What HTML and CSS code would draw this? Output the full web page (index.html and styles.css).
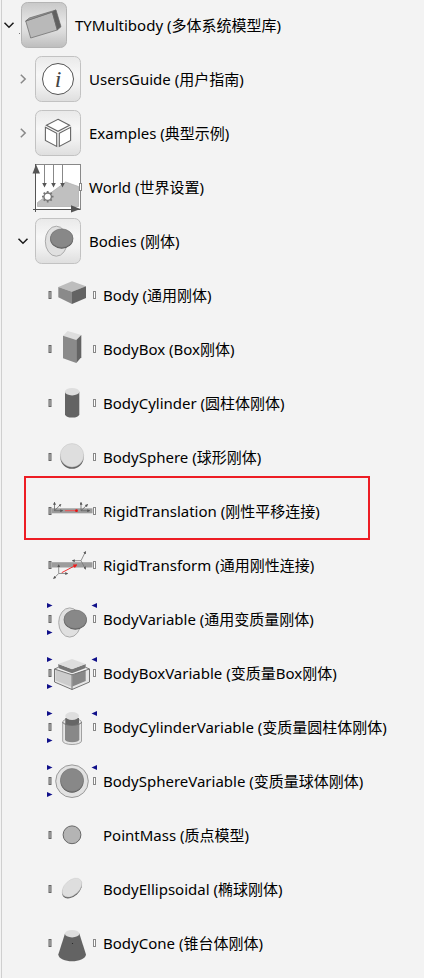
FILE: index.html
```html
<!DOCTYPE html>
<html lang="zh-CN">
<head>
<meta charset="utf-8">
<meta name="viewport" content="width=device-width, initial-scale=1">
<title>TYMultibody</title>
<link rel="stylesheet" href="styles.css">
</head>
<body>
<svg class="defs" aria-hidden="true">
  <defs>
    <linearGradient id="tile" x1="0" y1="0" x2="0" y2="1">
      <stop offset="0" stop-color="#e9e9e9"/><stop offset=".4" stop-color="#f7f7f7"/><stop offset=".65" stop-color="#f1f1f1"/><stop offset="1" stop-color="#dedede"/>
    </linearGradient>
    <linearGradient id="tile-dark" x1="0" y1="0" x2="0" y2="1">
      <stop offset="0" stop-color="#c8c8c8"/><stop offset=".45" stop-color="#e6e6e6"/><stop offset=".65" stop-color="#dcdcdc"/><stop offset="1" stop-color="#bdbdbd"/>
    </linearGradient>
    <marker id="tip" viewBox="0 0 4 4" refX="3" refY="2" markerWidth="3" markerHeight="3" markerUnits="userSpaceOnUse" orient="auto"><path d="M0 0L4 2L0 4Z" fill="#555"/></marker>
    <marker id="tip-red" viewBox="0 0 4 4" refX="3" refY="2" markerWidth="4" markerHeight="4" markerUnits="userSpaceOnUse" orient="auto"><path d="M0 0L4 2L0 4Z" fill="#f01818"/></marker>
    <g id="port-a"><rect x="1" y="20.5" width="2" height="7" fill="#bbb" stroke="#666"/></g>
    <g id="port-b"><rect x="45.5" y="20.5" width="2" height="7" fill="#fff" stroke="#888"/></g>
    <g id="inputs" fill="#10108a"><path d="M-1 8L4.5 10.5L-1 13Z"/><path d="M-1 35L4.5 37.5L-1 40Z"/><path d="M49 8L43.5 10.5L49 13Z"/></g>
  </defs>
</svg>
<main class="browser">
<ul class="tree">
  <li>
    <div class="row">
      <button class="toggle open" aria-label="TYMultibody"><svg viewBox="0 0 14 14"><path d="M2.5 4.8L7 9.2L11.5 4.8"/></svg></button>
      <svg class="icon" viewBox="0 0 48 48"><rect x="1.5" y="1.5" width="45" height="45" rx="6" fill="url(#tile-dark)" stroke="#b4b4b4"/><rect x="-1" y="32" width="1" height="1" fill="#777"/><g stroke="#666" stroke-width=".7" stroke-linejoin="round"><path d="M5.7 20L32.3 11L37.3 29L10.7 37Z" fill="#b9b9b9"/><path d="M5.7 20L9.3 17L36 9L32.3 11Z" fill="#999"/><path d="M32.3 11L36 9L41 25.7L37.3 29Z" fill="#606060"/></g></svg>
      <span class="name">TYMultibody (多体系统模型库)</span>
    </div>
    <ul>
      <li><div class="row">
        <button class="toggle" aria-label="UsersGuide"><svg viewBox="0 0 14 14"><path d="M4.8 2.7L9.2 7L4.8 11.3"/></svg></button>
        <svg class="icon" viewBox="0 0 48 48"><rect x="1.5" y="1.5" width="45" height="45" rx="6" fill="url(#tile)" stroke="#c2c2c2"/><circle cx="24" cy="24" r="15.5" fill="#fff" stroke="#555"/><text class="info" x="24" y="32" text-anchor="middle">i</text></svg>
        <span class="name">UsersGuide (用户指南)</span>
      </div></li>
      <li><div class="row">
        <button class="toggle" aria-label="Examples"><svg viewBox="0 0 14 14"><path d="M4.8 2.7L9.2 7L4.8 11.3"/></svg></button>
        <svg class="icon" viewBox="0 0 48 48"><rect x="1.5" y="1.5" width="45" height="45" rx="6" fill="url(#tile)" stroke="#c2c2c2"/><g fill="#fff" stroke="#666" stroke-width="1.1"><path d="M24 10.3L35.6 16.3L24 22.3L12.4 16.3Z"/><path d="M11.4 18.3L22.7 24.3V37.4L11.4 31.4Z"/><path d="M25.3 24.3L36.6 18.3V31.4L25.3 37.4Z"/></g></svg>
        <span class="name">Examples (典型示例)</span>
      </div></li>
      <li><div class="row">
        <span class="toggle"></span>
        <svg class="icon" viewBox="0 0 48 48"><rect x="1.5" y="1.5" width="45" height="45" fill="#fff" stroke="#888"/><path d="M3.5 39.5L31.7 19L44.5 23.5V43.5H3.5Z" fill="#c0c0c0" stroke="#aaa" stroke-width=".7"/><path d="M1.5 1V49M-1 46.5H46" stroke="#555" fill="none"/><path d="M2 1.5L6 10.5H-1.5Z" fill="#555"/><path d="M46.5 46L37 42.3V49.5Z" fill="#555"/><path d="M10.5 2V21M19.5 2V21M28.5 2V21" stroke="#888" fill="none"/><path d="M8.2 20H12.8L10.5 24.5ZM17.2 20H21.8L19.5 24.5ZM26.2 20H30.8L28.5 24.5Z" fill="#555"/><circle cx="13.7" cy="33.7" r="3.7" fill="#fff" stroke="#777" stroke-width="1.3"/><path d="M13.7 28V30M13.7 37.5V39.5M8 33.7H10M17.5 33.7H19.5M9.7 29.7L11 31M16.5 36.5L17.7 37.7M9.7 37.7L11 36.5M16.5 31L17.7 29.7" stroke="#777" stroke-width="1.8"/><use href="#port-b"/></svg>
        <span class="name">World (世界设置)</span>
      </div></li>
      <li>
        <div class="row">
          <button class="toggle open" aria-label="Bodies"><svg viewBox="0 0 14 14"><path d="M2.5 4.8L7 9.2L11.5 4.8"/></svg></button>
          <svg class="icon" viewBox="0 0 48 48"><rect x="1.5" y="1.5" width="45" height="45" rx="6" fill="url(#tile)" stroke="#c2c2c2"/><ellipse cx="22.3" cy="24.2" rx="11" ry="15" fill="#e0e0e0" stroke="#aaa"/><ellipse cx="27.7" cy="22" rx="11.5" ry="9.7" fill="#555"/><ellipse cx="27.7" cy="21.2" rx="11.2" ry="9.3" fill="#888" stroke="#777" stroke-width=".7"/></svg>
          <span class="name">Bodies (刚体)</span>
        </div>
        <ul>
          <li><div class="row leaf">
            <svg class="icon" viewBox="0 0 48 48"><use href="#port-a"/><use href="#port-b"/><path d="M24 10.3L38 15.3L24 20.7L10.3 16Z" fill="#bdbdbd"/><path d="M10.3 16L24 20.7V33L10.3 26.3Z" fill="#8a8a8a"/><path d="M38 15.3L24 20.7V33L38 27Z" fill="#636363"/></svg>
            <span class="name">Body (通用刚体)</span>
          </div></li>
          <li><div class="row leaf">
            <svg class="icon" viewBox="0 0 48 48"><use href="#port-a"/><use href="#port-b"/><path d="M19.7 6L33.3 10L28.3 15L15 10.7Z" fill="#dedede"/><path d="M15 10.7L28.3 15V38L15 33.3Z" fill="#8a8a8a"/><path d="M33.3 10L28.3 15V38L33.3 32.3Z" fill="#636363"/></svg>
            <span class="name">BodyBox (Box刚体)</span>
          </div></li>
          <li><div class="row leaf">
            <svg class="icon" viewBox="0 0 48 48"><use href="#port-a"/><use href="#port-b"/><path d="M17 12.7V35.5A7.2 3.5 0 0 0 31.3 35.5V12.7Z" fill="#636363"/><ellipse cx="24.1" cy="12.7" rx="7.2" ry="3.7" fill="#dedede"/></svg>
            <span class="name">BodyCylinder (圆柱体刚体)</span>
          </div></li>
          <li><div class="row leaf">
            <svg class="icon" viewBox="0 0 48 48"><use href="#port-a"/><use href="#port-b"/><circle cx="24" cy="24.2" r="11.6" fill="#636363"/><circle cx="24" cy="22.3" r="11.7" fill="#dedede" stroke="#c4c4c4" stroke-width=".5"/></svg>
            <span class="name">BodySphere (球形刚体)</span>
          </div></li>
          <li><div class="row leaf marked">
            <svg class="icon" viewBox="0 0 48 48"><rect x="4" y="21.3" width="40.5" height="5" fill="#9c9c9c"/><path d="M17 23.7H28" stroke="#f05050"/><circle cx="28.5" cy="23.7" r="1.4" fill="#e81010"/><g stroke="#666" stroke-width=".8"><path d="M6.5 23.7V15.5" marker-end="url(#tip)"/><path d="M6.5 23.7L12.7 17.5" marker-end="url(#tip)"/><path d="M6.5 23.7H14.5" marker-end="url(#tip)"/><path d="M33 23.7V15.5" marker-end="url(#tip)"/><path d="M33 23.7L39.5 17.5" marker-end="url(#tip)"/><path d="M33 23.7H41.5" marker-end="url(#tip)"/></g><use href="#port-a"/><use href="#port-b"/></svg>
            <span class="name">RigidTranslation (刚性平移连接)</span>
          </div></li>
          <li><div class="row leaf">
            <svg class="icon" viewBox="0 0 48 48"><rect x="4" y="21.2" width="40.5" height="5.3" fill="#9c9c9c"/><path d="M13.7 31.7L28.5 23.9" stroke="#f03030" marker-end="url(#tip-red)"/><g stroke="#777" stroke-width=".8"><path d="M10.7 32.5V24" marker-end="url(#tip)"/><path d="M10.7 32.5H19.5" marker-end="url(#tip)"/><path d="M10.7 32.5L5.7 37.5" marker-end="url(#tip)"/><path d="M33 19.7L37.5 10.7" marker-end="url(#tip)"/><path d="M33 19.7H24.5" marker-end="url(#tip)"/><path d="M33 19.7L37.5 28" marker-end="url(#tip)"/></g><use href="#port-a"/><use href="#port-b"/></svg>
            <span class="name">RigidTransform (通用刚性连接)</span>
          </div></li>
          <li><div class="row leaf">
            <svg class="icon" viewBox="0 0 48 48"><use href="#port-a"/><use href="#port-b"/><use href="#inputs"/><ellipse cx="21.7" cy="27.5" rx="11" ry="14.6" fill="#e0e0e0" stroke="#aaa"/><ellipse cx="27.3" cy="25" rx="11.5" ry="9.7" fill="#555"/><ellipse cx="27.3" cy="24.3" rx="11.2" ry="9.3" fill="#888" stroke="#777" stroke-width=".7"/></svg>
            <span class="name">BodyVariable (通用变质量刚体)</span>
          </div></li>
          <li><div class="row leaf">
            <svg class="icon" viewBox="0 0 48 48"><path d="M6.5 20V33L24 40.5L41.5 33V20L24 26Z" fill="#e6e6e6"/><path d="M7.5 20.5L23.5 26V38L7.5 31.5Z" fill="#ccc"/><path d="M24.5 26L37.7 21V32L24.5 37.5Z" fill="#888"/><path d="M10.3 15V19L24 24.2V20ZM24 20V24.2L37.7 19V15Z" fill="#777"/><path d="M24 10L37.7 15L24 20.3L10.3 15Z" fill="#dedede"/><path d="M10 18.5L6.500 20V33L24 40.5L41.5 33V20L38 18.5M6.5 20L24 25.8L41.5 20M24 25.8V40.5" fill="none" stroke="#666" stroke-width=".9"/><use href="#port-a"/><use href="#port-b"/><use href="#inputs"/></svg>
            <span class="name">BodyBoxVariable (变质量Box刚体)</span>
          </div></li>
          <li><div class="row leaf">
            <svg class="icon" viewBox="0 0 48 48"><use href="#port-a"/><use href="#port-b"/><use href="#inputs"/><path d="M14.7 19V38A9.4 3.5 0 0 0 33.5 38V19A9.4 3.5 0 0 0 14.7 19Z" fill="#e6e6e6" stroke="#999" stroke-width=".9"/><path d="M17 20V36.5A7.2 3 0 0 0 31.3 36.5V20Z" fill="#888"/><path d="M17.3 15V19.5A6.9 3 0 0 0 31 19.5V15Z" fill="#666"/><ellipse cx="24.1" cy="13" rx="6.9" ry="4" fill="#dedede"/><path d="M14.7 19A9.4 3.3 0 0 0 33.5 19" fill="none" stroke="#666" stroke-width=".8"/></svg>
            <span class="name">BodyCylinderVariable (变质量圆柱体刚体)</span>
          </div></li>
          <li><div class="row leaf">
            <svg class="icon" viewBox="0 0 48 48"><use href="#port-a"/><use href="#port-b"/><use href="#inputs"/><circle cx="24" cy="24.2" r="16.3" fill="#e2e2e2" stroke="#999"/><circle cx="24" cy="24.2" r="11.5" fill="#555"/><circle cx="24" cy="23" r="11.5" fill="#888" stroke="#777" stroke-width=".6"/></svg>
            <span class="name">BodySphereVariable (变质量球体刚体)</span>
          </div></li>
          <li><div class="row leaf">
            <svg class="icon" viewBox="0 0 48 48"><use href="#port-a"/><circle cx="24" cy="23.8" r="8.9" fill="#b4b4b4" stroke="#666"/></svg>
            <span class="name">PointMass (质点模型)</span>
          </div></li>
          <li><div class="row leaf">
            <svg class="icon" viewBox="0 0 48 48"><use href="#port-a"/><ellipse cx="24" cy="24" rx="11.5" ry="7.3" transform="rotate(-42 24 24)" fill="#636363"/><ellipse cx="24" cy="22.6" rx="11.5" ry="7.3" transform="rotate(-42 24 22.6)" fill="#dedede" stroke="#ccc" stroke-width=".5"/></svg>
            <span class="name">BodyEllipsoidal (椭球刚体)</span>
          </div></li>
          <li><div class="row leaf">
            <svg class="icon" viewBox="0 0 48 48"><use href="#port-a"/><use href="#port-b"/><path d="M17 14.5L10.3 35.5C11 44.5 37 44.5 38 35.5L31.3 14.5Z" fill="#636363"/><ellipse cx="24.1" cy="14.7" rx="7.2" ry="3.7" fill="#dedede"/><circle cx="24.5" cy="24.5" r=".6" fill="#222"/></svg>
            <span class="name">BodyCone (锥台体刚体)</span>
          </div></li>
        </ul>
      </li>
    </ul>
  </li>
</ul>
</main>
</body>
</html>
```
FILE: styles.css
```css
* {
  box-sizing: border-box;
}

body {
  margin: 0;
  background: #f3f3f3;
  color: #000;
  font-family: "Noto Sans", "Noto Sans CJK SC", sans-serif;
  font-size: 15px;
  line-height: 20px;
}

.defs {
  position: absolute;
  width: 0;
  height: 0;
}

.browser {
  display: flow-root;
  min-height: 100vh;
  margin-left: 1px;
  border-left: 1px solid #cfcfcf;
}

.tree,
.tree ul {
  margin: 0;
  padding: 0;
  list-style: none;
}

.tree {
  margin-top: -2px;
}

.tree ul {
  padding-left: 14px;
}

.row {
  display: flex;
  align-items: center;
  height: 54px;
  position: relative;
}

.toggle {
  flex: none;
  width: 14px;
  height: 14px;
  margin: 0 4px 0 0;
  padding: 0;
  border: 0;
  background: none;
}

.toggle svg {
  display: block;
  fill: none;
  stroke: #888;
  stroke-width: 1.5px;
}

.toggle.open svg {
  stroke: #1a1a1a;
}

.leaf {
  padding-left: 18px;
}

.icon {
  flex: none;
  width: 48px;
  height: 48px;
  margin-right: 7px;
  overflow: visible;
}

.info {
  font: italic 24px "Liberation Serif", serif;
  fill: #444;
}

.name {
  white-space: nowrap;
}

/* Callout frame around the recommended component */
.marked::after {
  content: "";
  position: absolute;
  inset: -8px 54px -2px -6px;
  border: 2px solid #ed1c24;
}
```
